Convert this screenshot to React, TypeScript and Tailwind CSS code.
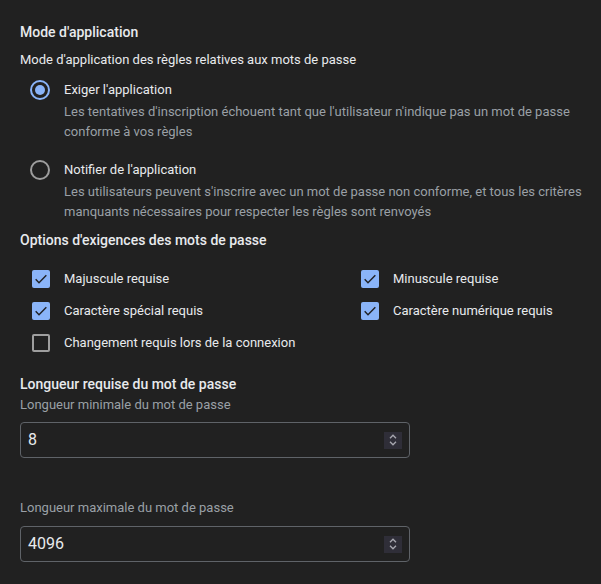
import React from "react";

const Radio = ({ checked }: { checked: boolean }) =>
  checked ? (
    <span className="w-5 h-5 rounded-full border-2 border-[#8ab4f8] flex items-center justify-center shrink-0">
      <span className="w-[10px] h-[10px] rounded-full bg-[#8ab4f8]" />
    </span>
  ) : (
    <span className="w-5 h-5 rounded-full border-2 border-[#9e9e9e] shrink-0" />
  );

const Check = ({ checked }: { checked: boolean }) =>
  checked ? (
    <span className="w-[18px] h-[18px] rounded-[2px] bg-[#8ab4f8] flex items-center justify-center shrink-0">
      <svg width="16" height="16" viewBox="0 0 24 24" fill="none">
        <path d="M4 12.5l5 5L20 6.5" stroke="#202124" strokeWidth="2.2" />
      </svg>
    </span>
  ) : (
    <span className="w-[18px] h-[18px] rounded-[2px] border-2 border-[#9e9e9e] shrink-0" />
  );

const RadioOption = ({ checked, label, desc }: { checked: boolean; label: string; desc: string }) => (
  <div className="flex pl-[10px]">
    <div className="h-5 flex items-center">
      <Radio checked={checked} />
    </div>
    <div className="ml-[14px] flex flex-col">
      <div className="text-[13px] leading-5 text-[#e8eaed]">{label}</div>
      <div className="text-[13px] leading-5 text-[#9aa0a6] mt-[2px] w-[520px]">{desc}</div>
    </div>
  </div>
);

const CheckItem = ({ checked, label }: { checked: boolean; label: string }) => (
  <div className="flex items-center h-5">
    <Check checked={checked} />
    <span className="ml-[14px] text-[13px] leading-5 text-[#e8eaed]">{label}</span>
  </div>
);

const NumberInput = ({ value }: { value: string }) => (
  <div className="w-[390px] h-[36px] border border-[#5f6368] rounded-[4px] flex items-center justify-between pl-[7px] pr-[7px]">
    <span className="text-[16px] text-[#e8eaed]">{value}</span>
    <span className="w-[18px] h-[17px] bg-[#2f2e38] flex flex-col items-center justify-center gap-[2px]">
      <svg width="8" height="5" viewBox="0 0 8 5" fill="none">
        <path d="M1 4.2L4 1.2L7 4.2" stroke="#a8a8b0" strokeWidth="1.3" />
      </svg>
      <svg width="8" height="5" viewBox="0 0 8 5" fill="none">
        <path d="M1 0.8L4 3.8L7 0.8" stroke="#a8a8b0" strokeWidth="1.3" />
      </svg>
    </span>
  </div>
);

export default function App() {
  return (
    <div
      className="w-[601px] h-[584px] bg-[#212121] pl-5 pt-[22px] overflow-hidden"
      style={{ fontFamily: "Roboto, 'Noto Sans', Arial, sans-serif" }}
    >
      <div className="text-[14px] leading-5 font-medium text-[#e8eaed]">Mode d'application</div>
      <div className="mt-2 text-[13px] leading-5 text-[#e8eaed]">
        Mode d'application des règles relatives aux mots de passe
      </div>
      <div className="mt-[10px] flex flex-col gap-[18px]">
        <RadioOption
          checked
          label="Exiger l'application"
          desc="Les tentatives d'inscription échouent tant que l'utilisateur n'indique pas un mot de passe conforme à vos règles"
        />
        <RadioOption
          checked={false}
          label="Notifier de l'application"
          desc="Les utilisateurs peuvent s'inscrire avec un mot de passe non conforme, et tous les critères manquants nécessaires pour respecter les règles sont renvoyés"
        />
      </div>
      <div className="mt-2 text-[14px] leading-5 font-medium text-[#e8eaed]">
        Options d'exigences des mots de passe
      </div>
      <div className="mt-[19px] pl-[12px] grid grid-cols-[329px_1fr] gap-y-3">
        <CheckItem checked label="Majuscule requise" />
        <CheckItem checked label="Minuscule requise" />
        <CheckItem checked label="Caractère spécial requis" />
        <CheckItem checked label="Caractère numérique requis" />
        <CheckItem checked={false} label="Changement requis lors de la connexion" />
      </div>
      <div className="mt-[21px] text-[14px] leading-5 font-medium text-[#e8eaed]">
        Longueur requise du mot de passe
      </div>
      <div className="mt-[1px] text-[13px] leading-5 text-[#9aa0a6]">Longueur minimale du mot de passe</div>
      <div className="mt-[7px]">
        <NumberInput value="8" />
      </div>
      <div className="mt-[40px] text-[13px] leading-5 text-[#9aa0a6]">Longueur maximale du mot de passe</div>
      <div className="mt-[8px]">
        <NumberInput value="4096" />
      </div>
    </div>
  );
}
